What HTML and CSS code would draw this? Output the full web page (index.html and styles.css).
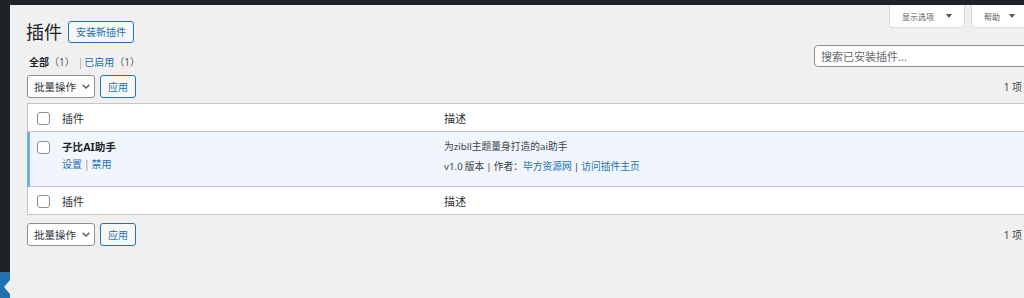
FILE: index.html
```html
<!DOCTYPE html>
<html lang="zh-CN">
<head>
<meta charset="utf-8">
<title>插件</title>
<link rel="stylesheet" href="styles.css">
</head>
<body>
<div class="adminbar"></div>
<div class="layout">
  <aside class="sidebar">
    <div class="menu-current"><span class="menu-arrow"></span></div>
  </aside>
  <main class="content">
    <div class="screen-meta">
      <button class="meta-btn meta-btn-options">显示选项<span class="tri"></span></button>
      <button class="meta-btn meta-btn-help">帮助<span class="tri"></span></button>
    </div>
    <div class="head-row">
      <h1 class="page-title">插件</h1>
      <a class="btn-outline">安装新插件</a>
    </div>
    <div class="filter-row">
      <ul class="subsubsub">
        <li><a class="current">全部</a><span class="count">（1）</span></li>
        <li class="sep">|</li>
        <li><a class="link">已启用</a><span class="count">（1）</span></li>
      </ul>
      <input class="search-input" type="search" placeholder="搜索已安装插件...">
    </div>
    <div class="tablenav">
      <div class="select">批量操作<svg class="chev" width="8" height="5" viewBox="0 0 8 5"><path d="M0.7 0.7 L4 4 L7.3 0.7" fill="none" stroke="#50575e" stroke-width="1.3"/></svg></div>
      <a class="btn-outline btn-apply">应用</a>
      <span class="num">1 项</span>
    </div>
    <table class="plugins">
      <thead>
        <tr>
          <td class="check-col"><span class="cb"></span></td>
          <th class="name-col">插件</th>
          <th class="desc-col">描述</th>
        </tr>
      </thead>
      <tbody>
        <tr class="active">
          <td class="check-col"><span class="cb"></span></td>
          <td class="name-col">
            <strong class="plugin-title">子比AI助手</strong>
            <div class="row-actions"><a class="link">设置</a><span class="sep">|</span><a class="link">禁用</a></div>
          </td>
          <td class="desc-col">
            <p class="desc">为zibll主题量身打造的ai助手</p>
            <p class="meta">v1.0 版本 <span class="bar">|</span> 作者：<a class="link">毕方资源网</a> <span class="bar">|</span> <a class="link">访问插件主页</a></p>
          </td>
        </tr>
      </tbody>
      <tfoot>
        <tr>
          <td class="check-col"><span class="cb"></span></td>
          <th class="name-col">插件</th>
          <th class="desc-col">描述</th>
        </tr>
      </tfoot>
    </table>
    <div class="tablenav bottom">
      <div class="select">批量操作<svg class="chev" width="8" height="5" viewBox="0 0 8 5"><path d="M0.7 0.7 L4 4 L7.3 0.7" fill="none" stroke="#50575e" stroke-width="1.3"/></svg></div>
      <a class="btn-outline btn-apply">应用</a>
      <span class="num">1 项</span>
    </div>
  </main>
</div>
</body>
</html>
```
FILE: styles.css
```css
* { box-sizing: border-box; }
html, body { margin: 0; padding: 0; }
body {
  width: 1024px;
  height: 298px;
  overflow: hidden;
  background: #f0f0f1;
  font-family: "Noto Sans", "Noto Sans CJK SC", sans-serif;
  font-size: 10px;
  color: #3c434a;
}
.adminbar { height: 5px; background: #1d2327; }
.layout { display: flex; width: 1044px; height: 293px; }
.sidebar {
  width: 10px;
  flex: none;
  background: #1d2327;
  display: flex;
  flex-direction: column;
  justify-content: flex-end;
}
.menu-current { height: 26px; background: #2271b1; position: relative; }
.menu-arrow {
  position: absolute;
  right: 0;
  top: 8px;
  width: 0;
  height: 0;
  border-top: 7px solid transparent;
  border-bottom: 7px solid transparent;
  border-right: 6px solid #f0f0f1;
}
.content { flex: 1; padding: 0 16px 0 17px; }

.screen-meta { float: right; display: flex; gap: 6px; }
.meta-btn {
  height: 23px;
  background: #fff;
  border: 1px solid #dcdcde;
  border-top: none;
  border-radius: 0 0 4px 4px;
  padding: 0 12px;
  display: flex;
  align-items: center;
  font-family: "Noto Sans", "Noto Sans CJK SC", sans-serif;
  font-size: 8px;
  color: #50575e;
}
.meta-btn .tri {
  width: 0;
  height: 0;
  border-left: 3px solid transparent;
  border-right: 3px solid transparent;
  border-top: 4px solid #50575e;
  margin-left: 12px;
}
.meta-btn-help .tri { margin-left: 9px; }

.head-row { display: flex; align-items: center; gap: 6px; padding-top: 16px; height: 38px; }
.page-title {
  margin: 0 0 0 -1px;
  font-size: 18px;
  line-height: 22px;
  font-weight: 400;
  color: #1d2327;
}
.btn-outline {
  display: inline-flex;
  align-items: center;
  height: 22px;
  padding: 0 7px;
  border: 1px solid #2271b1;
  border-radius: 3px;
  background: #f6f7f7;
  color: #2271b1;
  font-size: 10px;
  line-height: 20px;
}

.filter-row {
  display: flex;
  justify-content: space-between;
  align-items: flex-start;
  margin-top: 2px;
  height: 22px;
}
.subsubsub {
  list-style: none;
  margin: 10px 0 0 2px;
  padding: 0;
  display: flex;
  font-size: 10px;
  line-height: 14px;
}
.subsubsub .current { color: #1d2327; font-weight: 700; }
.subsubsub .count { color: #50575e; }
.subsubsub .sep { color: #a7aaad; padding: 0 1px 0 3px; }
.link { color: #2271b1; text-decoration: none; }
.search-input {
  width: 214px;
  height: 22px;
  margin: 0;
  border: 1px solid #8c8f94;
  border-radius: 4px;
  padding: 0 6px;
  background: #fff;
  font-family: "Noto Sans", "Noto Sans CJK SC", sans-serif;
  font-size: 11px;
  color: #2c3338;
  outline: none;
}
.search-input::placeholder { color: #646970; }

.tablenav { display: flex; align-items: center; gap: 5px; margin-top: 8px; height: 23px; }
.select {
  width: 68px;
  height: 23px;
  border: 1px solid #8c8f94;
  border-radius: 3px;
  background: #fff;
  padding-left: 6px;
  display: flex;
  align-items: center;
  gap: 6px;
  font-size: 10.5px;
  color: #2c3338;
}
.chev { flex: none; }
.btn-apply { height: 23px; }
.num { margin-left: auto; margin-right: 6px; font-size: 10px; color: #3c434a; }

.plugins {
  width: 100%;
  margin-top: 5px;
  border: 1px solid #c3c4c7;
  border-spacing: 0;
  background: #fff;
  table-layout: fixed;
}
.plugins th, .plugins td { padding: 0; text-align: left; font-weight: 400; }
.plugins thead th, .plugins thead td, .plugins tfoot th, .plugins tfoot td {
  vertical-align: middle;
  font-size: 11px;
  color: #2c3338;
}
.plugins thead th, .plugins thead td { height: 28px; border-bottom: 1px solid #c3c4c7; }
.plugins tfoot th, .plugins tfoot td { height: 27px; }
.plugins tbody td { border-bottom: 1px solid #c3c4c7; }
.check-col { width: 24px; padding-left: 9px !important; }
.name-col { width: 382px; padding-left: 10px !important; }
.desc-col { padding-left: 10px !important; }
.cb {
  display: block;
  width: 13px;
  height: 13px;
  border: 1px solid #8c8f94;
  border-radius: 3px;
  background: #fff;
  margin-top: 1px;
}
.plugins tbody tr.active td { background: #f0f6fc; height: 55px; vertical-align: top; }
.plugins tbody tr.active td.check-col { position: relative; padding-top: 9px; }
.plugins tbody tr.active td.check-col::before {
  content: "";
  position: absolute;
  left: -1px;
  top: 0;
  bottom: -1px;
  width: 3px;
  background: #72aee6;
}
.plugins tbody tr.active td.check-col .cb { margin-top: 0; }
.plugins tbody .name-col { padding-top: 7px; }
.plugin-title {
  display: block;
  font-size: 10.6px;
  line-height: 16px;
  font-weight: 700;
  color: #1d2327;
}
.row-actions { margin-top: 2px; font-size: 10px; line-height: 14px; }
.row-actions .sep { color: #8c8f94; padding: 0 2px; }
.plugins tbody .desc-col { padding-top: 8px; }
.desc, .meta { margin: 0; font-size: 9.75px; line-height: 14px; color: #3c434a; }
.meta { margin-top: 6px; word-spacing: -0.5px; }
.meta .bar { color: #3c434a; }
.bottom { margin-top: 8px; }
```
